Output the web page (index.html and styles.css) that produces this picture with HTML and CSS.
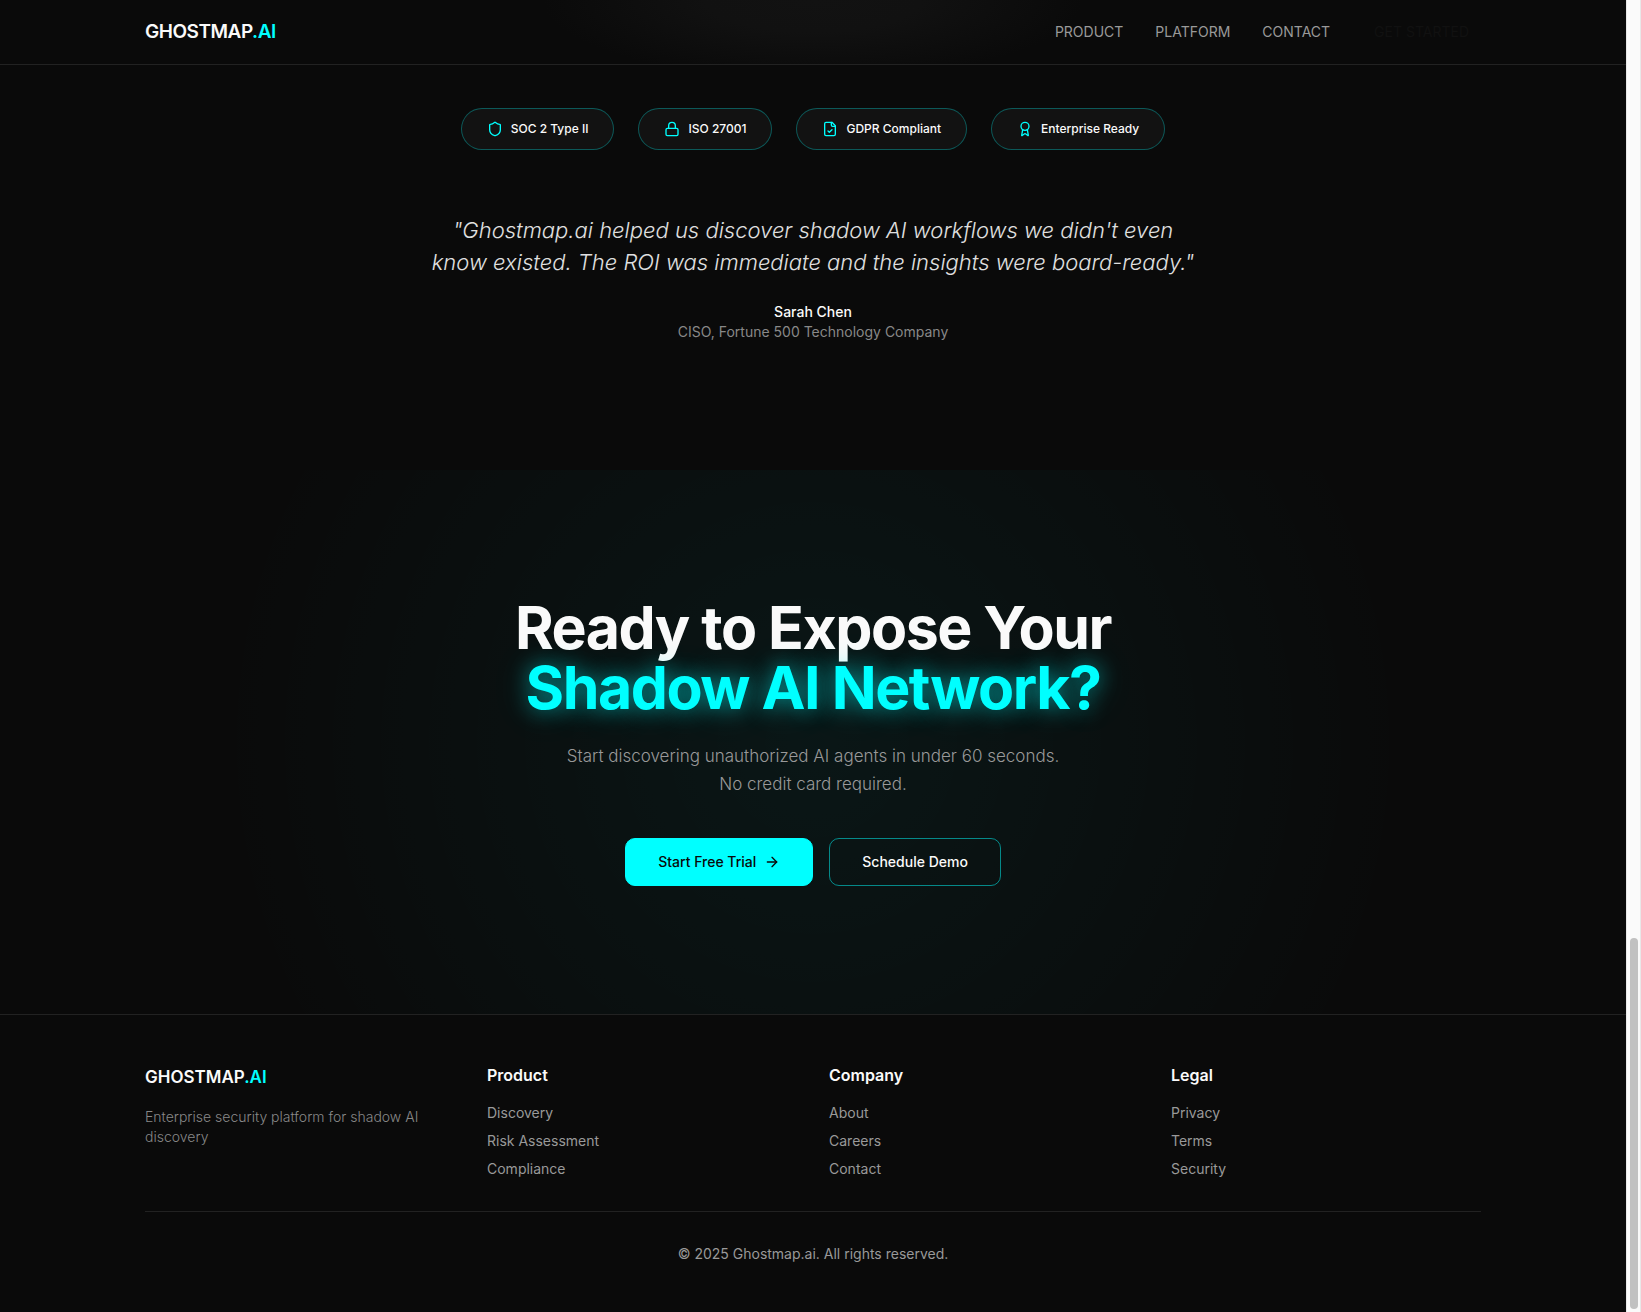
FILE: index.html
```html
<!DOCTYPE html>
<html lang="en">
<head>
<meta charset="utf-8">
<meta name="viewport" content="width=device-width, initial-scale=1">
<title>Ghostmap.ai</title>
<link rel="stylesheet" href="styles.css">
</head>
<body>
<div class="page">
  <header class="site-header">
    <div class="container header-row">
      <a class="logo" href="#">GHOSTMAP<span class="accent">.AI</span></a>
      <nav class="nav">
        <a href="#product">PRODUCT</a>
        <a href="#platform">PLATFORM</a>
        <a href="#contact">CONTACT</a>
        <button class="nav-cta" type="button">GET STARTED</button>
      </nav>
    </div>
  </header>

  <main>
    <section class="trust">
      <ul class="badges">
        <li class="badge">
          <svg class="icon" viewBox="0 0 24 24"><path d="M20 13c0 5-3.500 7.500-7.660 8.950a1 1 0 0 1-.67-.01C7.500 20.500 4 18 4 13V6a1 1 0 0 1 1-1c2 0 4.500-1.200 6.240-2.720a1.170 1.170 0 0 1 1.520 0C14.510 3.810 17 5 19 5a1 1 0 0 1 1 1z"/></svg>
          SOC 2 Type II
        </li>
        <li class="badge">
          <svg class="icon" viewBox="0 0 24 24"><rect width="18" height="11" x="3" y="11" rx="2"/><path d="M7 11V7a5 5 0 0 1 10 0v4"/></svg>
          ISO 27001
        </li>
        <li class="badge">
          <svg class="icon" viewBox="0 0 24 24"><path d="M15 2H6a2 2 0 0 0-2 2v16a2 2 0 0 0 2 2h12a2 2 0 0 0 2-2V7Z"/><path d="M14 2v4a2 2 0 0 0 2 2h4"/><path d="m9 15 2 2 4-4"/></svg>
          GDPR Compliant
        </li>
        <li class="badge">
          <svg class="icon" viewBox="0 0 24 24"><path d="m15.477 12.890 1.515 8.526a.5.5 0 0 1-.81.470l-3.580-2.687a1 1 0 0 0-1.197 0l-3.586 2.686a.5.5 0 0 1-.81-.469l1.514-8.526"/><circle cx="12" cy="8" r="6"/></svg>
          Enterprise Ready
        </li>
      </ul>
      <figure class="testimonial">
        <blockquote class="quote">"Ghostmap.ai helped us discover shadow AI workflows we didn't even know existed. The ROI was immediate and the insights were board-ready."</blockquote>
        <figcaption>
          <div class="author">Sarah Chen</div>
          <div class="role">CISO, Fortune 500 Technology Company</div>
        </figcaption>
      </figure>
    </section>

    <section class="cta">
      <h2 class="cta-title">Ready to Expose Your<br><span class="glow">Shadow AI Network?</span></h2>
      <p class="cta-text">Start discovering unauthorized AI agents in under 60 seconds.<br>No credit card required.</p>
      <div class="cta-actions">
        <button class="btn btn-primary" type="button">Start Free Trial
          <svg class="icon" viewBox="0 0 24 24"><path d="M5 12h14"/><path d="m12 5 7 7-7 7"/></svg>
        </button>
        <button class="btn btn-outline" type="button">Schedule Demo</button>
      </div>
    </section>
  </main>

  <footer class="site-footer">
    <div class="container">
      <div class="footer-grid">
        <div>
          <div class="footer-logo">GHOSTMAP<span class="accent">.AI</span></div>
          <p class="footer-text">Enterprise security platform for shadow AI discovery</p>
        </div>
        <div>
          <h3 class="footer-title">Product</h3>
          <ul class="footer-links">
            <li><a href="#discovery">Discovery</a></li>
            <li><a href="#risk">Risk Assessment</a></li>
            <li><a href="#compliance">Compliance</a></li>
          </ul>
        </div>
        <div>
          <h3 class="footer-title">Company</h3>
          <ul class="footer-links">
            <li><a href="#about">About</a></li>
            <li><a href="#careers">Careers</a></li>
            <li><a href="#contact">Contact</a></li>
          </ul>
        </div>
        <div>
          <h3 class="footer-title">Legal</h3>
          <ul class="footer-links">
            <li><a href="#privacy">Privacy</a></li>
            <li><a href="#terms">Terms</a></li>
            <li><a href="#security">Security</a></li>
          </ul>
        </div>
      </div>
      <p class="copyright">© 2025 Ghostmap.ai. All rights reserved.</p>
    </div>
  </footer>
</div>
<div class="scroll-track" aria-hidden="true"><div class="scroll-thumb"></div></div>
</body>
</html>
```
FILE: styles.css
```css
*,
*::before,
*::after {
  box-sizing: border-box;
}

body {
  display: flex;
  min-height: 100vh;
  margin: 0;
  background: #0a0a0a;
  color: #fafafa;
  font-family: Inter, "Liberation Sans", sans-serif;
  font-size: 14px;
  line-height: 20px;
  -webkit-font-smoothing: antialiased;
}

h2, h3, p, ul, figure, blockquote {
  margin: 0;
  padding: 0;
}

ul {
  list-style: none;
}

a {
  color: inherit;
  text-decoration: none;
}

button {
  font: inherit;
  cursor: pointer;
}

.page {
  flex: 1;
  min-width: 0;
}

.container {
  max-width: 1400px;
  margin: 0 auto;
  padding: 0 32px;
}

.accent {
  color: #00ffff;
}

.icon {
  width: 16px;
  height: 16px;
  flex: none;
  fill: none;
  stroke: currentColor;
  stroke-width: 2;
  stroke-linecap: round;
  stroke-linejoin: round;
}

/* Header */
.site-header {
  border-bottom: 1px solid #222222;
  background: radial-gradient(ellipse 270px 80px at 50% 0, #121212 0%, #111111 40%, #0a0a0a 100%);
}

.header-row {
  display: flex;
  align-items: center;
  justify-content: space-between;
  height: 64px;
}

.logo {
  font-size: 19px;
  font-weight: 600;
  line-height: 28px;
  letter-spacing: -0.025em;
}

.nav {
  display: flex;
  align-items: center;
  gap: 32px;
  color: #999999;
}

.nav-cta {
  padding: 8px 12px;
  border: 0;
  background: none;
  color: #111111;
}

/* Badges and testimonial */
.trust {
  padding: 43px 32px 128px;
}

.badges {
  display: flex;
  flex-wrap: wrap;
  justify-content: center;
  gap: 24px;
  margin-bottom: 64px;
}

.badge {
  display: flex;
  align-items: center;
  gap: 8px;
  padding: 10px 25px;
  border: 1px solid rgba(0, 255, 255, 0.3);
  border-radius: 24px;
  background: #121212;
  font-size: 12px;
  font-weight: 500;
}

.badge .icon {
  color: #00ffff;
}

.testimonial {
  max-width: 768px;
  margin: 0 auto;
  text-align: center;
}

.quote {
  margin-bottom: 24px;
  color: #e0e0e0;
  font-size: 22px;
  font-style: italic;
  font-weight: 300;
  line-height: 32px;
}

.author {
  font-weight: 500;
}

.role {
  color: #888888;
}

/* Call to action */
.cta {
  padding: 128px 32px;
  background: radial-gradient(circle at center, rgba(0, 255, 255, 0.05) 0%, transparent 70%);
  text-align: center;
}

.cta-title {
  margin-bottom: 24px;
  font-size: 59px;
  font-weight: 700;
  line-height: 60px;
  letter-spacing: -0.025em;
}

.glow {
  color: #00ffff;
  text-shadow: 0 0 20px rgba(0, 255, 255, 0.5), 0 0 40px rgba(0, 255, 255, 0.2);
}

.cta-text {
  margin-bottom: 40px;
  color: #999999;
  font-size: 17px;
  font-weight: 300;
  line-height: 28px;
}

.cta-actions {
  display: flex;
  flex-wrap: wrap;
  justify-content: center;
  gap: 16px;
}

.btn {
  display: flex;
  align-items: center;
  gap: 8px;
  height: 48px;
  padding: 0 32px;
  border: 1px solid #00ffff;
  border-radius: 10px;
  font-weight: 500;
}

.btn-primary {
  background: #00ffff;
  color: #0a0a0a;
}

.btn-outline {
  border-color: rgba(0, 255, 255, 0.5);
  background: transparent;
  color: #fafafa;
}

/* Footer */
.site-footer {
  padding: 48px 0;
  border-top: 1px solid #222222;
}

.footer-grid {
  display: grid;
  grid-template-columns: repeat(4, 1fr);
  gap: 32px;
  margin-bottom: 32px;
}

.footer-logo {
  margin-bottom: 16px;
  font-size: 17px;
  font-weight: 600;
  line-height: 28px;
}

.footer-text {
  color: #888888;
  font-weight: 300;
}

.footer-title {
  margin-bottom: 16px;
  font-size: 16px;
  font-weight: 600;
  line-height: 24px;
}

.footer-links {
  display: grid;
  gap: 8px;
  color: #999999;
}

.copyright {
  padding-top: 32px;
  border-top: 1px solid #222222;
  color: #999999;
  text-align: center;
}

/* Scroll indicator */
.scroll-track {
  display: flex;
  flex-direction: column;
  justify-content: flex-end;
  width: 15px;
  padding: 3px;
  border-left: 1px solid #e8e8e8;
  border-right: 1px solid #e8e8e8;
  background: #fafafa;
}

.scroll-thumb {
  width: 8px;
  height: 28.4%;
  border-radius: 4px;
  background: #c1c1c1;
}
```
